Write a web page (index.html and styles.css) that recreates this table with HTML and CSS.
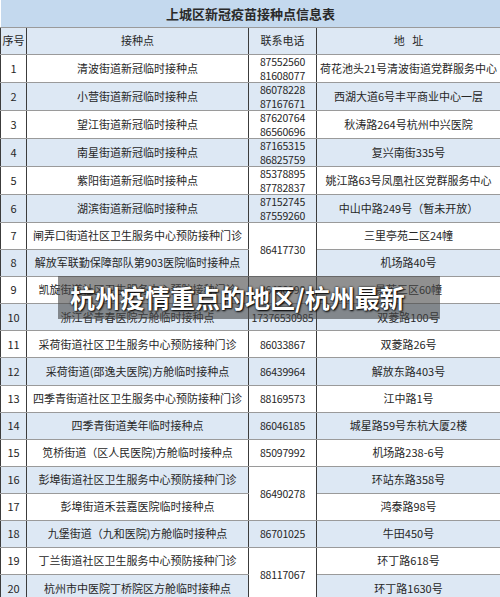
FILE: index.html
```html
<!DOCTYPE html>
<html lang="zh">
<head>
<meta charset="utf-8">
<title>上城区新冠疫苗接种点信息表</title>
<link rel="stylesheet" href="styles.css">
</head>
<body>
<div class="page">
  <table class="sheet">
    <colgroup>
      <col class="c-no">
      <col class="c-name">
      <col class="c-tel">
      <col class="c-addr">
    </colgroup>
    <thead>
      <tr class="title-row"><th colspan="4">上城区新冠疫苗接种点信息表</th></tr>
      <tr class="head-row"><th>序号</th><th>接种点</th><th>联系电话</th><th>地&nbsp;&nbsp;&nbsp;址</th></tr>
    </thead>
    <tbody>
      <tr><td>1</td><td>清波街道新冠临时接种点</td><td class="tel">87552560<br>81608077</td><td>荷花池头21号清波街道党群服务中心</td></tr>
      <tr class="alt"><td>2</td><td>小营街道新冠临时接种点</td><td class="tel">86078228<br>87167671</td><td>西湖大道6号丰平商业中心一层</td></tr>
      <tr><td>3</td><td>望江街道新冠临时接种点</td><td class="tel">87620764<br>86560696</td><td>秋涛路264号杭州中兴医院</td></tr>
      <tr class="alt"><td>4</td><td>南星街道新冠临时接种点</td><td class="tel">87165315<br>86825759</td><td>复兴南街335号</td></tr>
      <tr><td>5</td><td>紫阳街道新冠临时接种点</td><td class="tel">85378895<br>87782837</td><td>姚江路63号凤凰社区党群服务中心</td></tr>
      <tr class="alt"><td>6</td><td>湖滨街道新冠临时接种点</td><td class="tel">87152745<br>87559260</td><td>中山中路249号（暂未开放）</td></tr>
      <tr><td>7</td><td>闸弄口街道社区卫生服务中心预防接种门诊</td><td class="tel merged" rowspan="2">86417730</td><td>三里亭苑二区24幢</td></tr>
      <tr class="alt"><td>8</td><td>解放军联勤保障部队第903医院临时接种点</td><td>机场路40号</td></tr>
      <tr><td>9</td><td>凯旋街道社区卫生服务中心预防接种门诊</td><td class="tel">86480098</td><td>景芳三区60幢</td></tr>
      <tr class="alt"><td>10</td><td>浙江省青春医院方舱临时接种点</td><td class="tel">17376530985</td><td>双菱路100号</td></tr>
      <tr><td>11</td><td>采荷街道社区卫生服务中心预防接种门诊</td><td class="tel">86033867</td><td>双菱路26号</td></tr>
      <tr class="alt"><td>12</td><td>采荷街道(邵逸夫医院)方舱临时接种点</td><td class="tel">86439964</td><td>解放东路403号</td></tr>
      <tr><td>13</td><td>四季青街道社区卫生服务中心预防接种门诊</td><td class="tel">88169573</td><td>江中路1号</td></tr>
      <tr class="alt"><td>14</td><td>四季青街道美年临时接种点</td><td class="tel">86046185</td><td>城星路59号东杭大厦2楼</td></tr>
      <tr><td>15</td><td>笕桥街道（区人民医院)方舱临时接种点</td><td class="tel">85097992</td><td>机场路238-6号</td></tr>
      <tr class="alt"><td>16</td><td>彭埠街道社区卫生服务中心预防接种门诊</td><td class="tel merged" rowspan="2">86490278</td><td>环站东路358号</td></tr>
      <tr><td>17</td><td>彭埠街道禾芸嘉医院临时接种点</td><td>鸿泰路98号</td></tr>
      <tr class="alt"><td>18</td><td>九堡街道（九和医院)方舱临时接种点</td><td class="tel">86701025</td><td>牛田450号</td></tr>
      <tr><td>19</td><td>丁兰街道社区卫生服务中心预防接种门诊</td><td class="tel merged" rowspan="2">88117067</td><td>环丁路618号</td></tr>
      <tr class="alt"><td>20</td><td>杭州市中医院丁桥院区方舱临时接种点</td><td>环丁路1630号</td></tr>
    </tbody>
  </table>
  <div class="banner">杭州疫情重点的地区/杭州最新</div>
</div>
</body>
</html>
```

FILE: styles.css
```css
html, body {
  margin: 0;
  padding: 0;
  background: #ffffff;
}

.page {
  position: relative;
  width: 500px;
  height: 597px;
  overflow: hidden;
  font-family: "Noto Sans CJK SC", "Noto Sans", "Liberation Sans", sans-serif;
  color: #262626;
}

.sheet {
  width: 500px;
  table-layout: fixed;
  border-collapse: collapse;
  font-size: 11px;
}

.c-no { width: 26px; }
.c-name { width: 222px; }
.c-tel { width: 68px; }
.c-addr { width: 184px; }

.sheet th,
.sheet td {
  padding: 0;
  text-align: center;
  vertical-align: middle;
  font-weight: normal;
  border-top: 1px solid #9a9a9a;
  border-bottom: 1px solid #9a9a9a;
  border-left: 1px solid #3c3c3c;
  border-right: 1px solid #3c3c3c;
  line-height: 13.5px;
  white-space: nowrap;
  overflow: hidden;
}

.title-row th {
  height: 27px;
  background: #c4d9ee;
  font-size: 13px;
  font-weight: bold;
  color: #2a2a2a;
  border-top: none;
  border-left: none;
  border-right: none;
}

.head-row th {
  height: 26px;
  background: #dde8f4;
  font-size: 11px;
}

.sheet tbody tr {
  height: 27.1px;
}

.sheet tbody tr.alt td {
  background: #dde8f4;
}

.sheet tbody tr.alt td.merged,
.sheet td.merged {
  background: #ffffff;
}

.tel {
  font-size: 10.5px;
  letter-spacing: -0.2px;
}

.banner {
  position: absolute;
  left: 58px;
  top: 276px;
  width: 382px;
  height: 43px;
  box-sizing: border-box;
  padding-left: 12px;
  background: rgba(70, 70, 70, 0.6);
  color: #ffffff;
  font-size: 25px;
  font-weight: bold;
  line-height: 43px;
  white-space: nowrap;
  text-shadow: 0 0 2px #000, 1px 1px 2px #000;
}
```
